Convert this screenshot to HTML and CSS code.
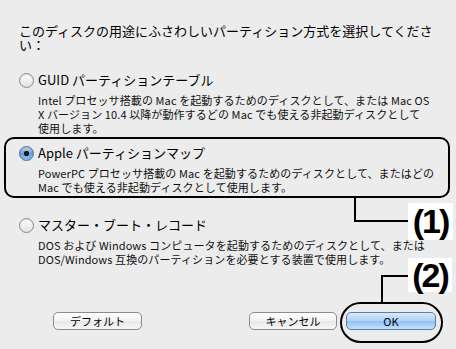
FILE: index.html
```html
<!DOCTYPE html>
<html lang="ja">
  <head>
    <meta charset="UTF-8" />
    <meta name="viewport" content="width=device-width, initial-scale=1.0" />
    <title>パーティション方式</title>
    <link rel="stylesheet" href="styles.css">
  </head>
  <body>
    <div class="dialog">
      <p class="prompt">
        このディスクの用途にふさわしいパーティション方式を選択してくださ<br>い：
      </p>

      <div class="options">
        <div class="option">
          <div class="option-row">
            <span class="radio"></span>
            <span class="option-label">GUID パーティションテーブル</span>
          </div>
          <div class="option-desc">
            Intel プロセッサ搭載の Mac を起動するためのディスクとして、または Mac OS<br>
            X バージョン 10.4 以降が動作するどの Mac でも使える非起動ディスクとして<br>
            使用します。
          </div>
        </div>

        <div class="option option-selected">
          <div class="option-row">
            <span class="radio radio-on"></span>
            <span class="option-label">Apple パーティションマップ</span>
          </div>
          <div class="option-desc">
            PowerPC プロセッサ搭載の Mac を起動するためのディスクとして、またはどの<br>
            Mac でも使える非起動ディスクとして使用します。
          </div>
        </div>

        <div class="option option-last">
          <div class="option-row">
            <span class="radio"></span>
            <span class="option-label">マスター・ブート・レコード</span>
          </div>
          <div class="option-desc">
            DOS および Windows コンピュータを起動するためのディスクとして、または<br>
            DOS/Windows 互換のパーティションを必要とする装置で使用します。
          </div>
        </div>
      </div>

      <div class="buttons">
        <button class="button">デフォルト</button>
        <button class="button button-cancel">キャンセル</button>
        <button class="button button-ok">OK</button>
      </div>

      <!-- annotation overlays -->
      <div class="callout-line callout-line-1"></div>
      <div class="tag tag-1">(1)</div>
      <div class="callout-line callout-line-2"></div>
      <div class="tag tag-2">(2)</div>
      <div class="ok-ring"></div>
    </div>
  </body>
</html>
```

FILE: styles.css
```css
body {
  margin: 0;
  background-color: #ececec;
  font-family: "Noto Sans CJK JP", sans-serif;
  color: #000;
}
.dialog {
  position: relative;
  width: 456px;
  height: 349px;
  overflow: hidden;
}
.prompt {
  margin: 0;
  padding: 24px 19px 0;
  font-size: 13px;
  line-height: 14px;
}
.options {
  margin: 12px 6px 0 4px;
}
.option {
  border: 2px solid transparent;
  border-radius: 10px;
  padding: 6px 13px 0;
}
.option-selected {
  border-color: #000;
  padding-bottom: 2px;
}
.option-last {
  margin-top: 11px;
}
.option-row {
  display: flex;
  align-items: center;
  gap: 4px;
  height: 16px;
  font-size: 13px;
}
.option-label {
  line-height: 16px;
}
.option-desc {
  margin: 5px 0 0 19px;
  font-size: 11px;
  line-height: 14px;
  letter-spacing: 0.1px;
  color: #111;
}
.radio {
  flex: none;
  width: 15px;
  height: 15px;
  box-sizing: border-box;
  border-radius: 50%;
  border: 1px solid #8a8a8a;
  background: linear-gradient(#fefefe, #e2e2e2);
  box-shadow: inset 0 1px 1px rgba(0, 0, 0, 0.12);
}
.radio-on {
  border-color: #4c6d96;
  background: radial-gradient(circle, #1a1a1a 0 2.4px, transparent 3px),
    linear-gradient(#c2dbf4, #6a9fd9 50%, #8ebdec);
}
.buttons {
  display: flex;
  margin-top: 44px;
  padding: 0 20px 0 53px;
}
.button {
  width: 89px;
  height: 18px;
  box-sizing: border-box;
  padding: 0;
  border: 1px solid #8c8c8c;
  border-radius: 5px;
  background: linear-gradient(#ffffff, #f3f3f3 50%, #e8e8e8 51%, #f7f7f7);
  font-family: "Noto Sans CJK JP", sans-serif;
  font-size: 11px;
  line-height: 16px;
  color: #000;
}
.button-cancel {
  width: 88px;
  margin-left: auto;
}
.button-ok {
  width: 90px;
  margin-left: 9px;
  border-color: #5b7ca6;
  background: linear-gradient(#d9eafb, #aed1f4 50%, #92c2f0 51%, #c0e0fb);
}
.callout-line {
  position: absolute;
  border: 0 solid #000;
}
.callout-line-1 {
  left: 354px;
  top: 197px;
  width: 52px;
  height: 23px;
  border-left-width: 2px;
  border-bottom-width: 2px;
}
.callout-line-2 {
  left: 381px;
  top: 275px;
  width: 25px;
  height: 26px;
  border-left-width: 2px;
  border-top-width: 2px;
}
.tag {
  position: absolute;
  background-color: #fff;
  font-family: "Liberation Sans", Arial, sans-serif;
  font-weight: bold;
  font-size: 34px;
  letter-spacing: -2px;
  text-align: center;
}
.tag-1 {
  left: 408px;
  top: 203px;
  width: 45px;
  height: 37px;
  line-height: 37px;
}
.tag-2 {
  left: 408px;
  top: 258px;
  width: 44px;
  height: 34px;
  line-height: 34px;
}
.ok-ring {
  position: absolute;
  left: 340px;
  top: 302px;
  width: 99px;
  height: 37px;
  border: 2px solid #000;
  border-radius: 21px;
}
```
